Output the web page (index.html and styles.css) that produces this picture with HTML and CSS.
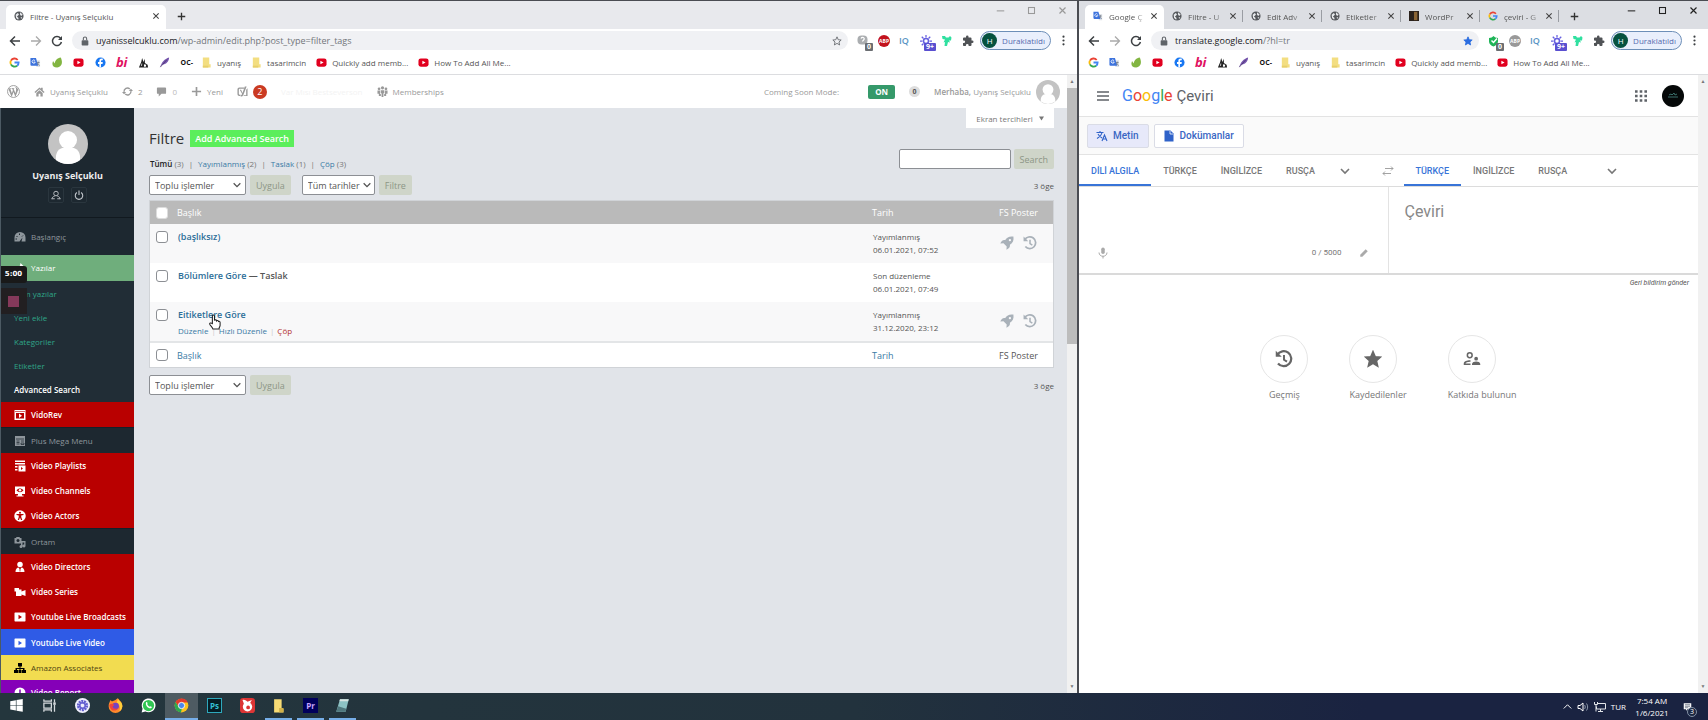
FILE: index.html
```html
<!DOCTYPE html>
<html lang="tr">
<head>
    <meta charset="UTF-8">
    <title>Filtre - Uyanış Selçuklu</title>
    <link rel="stylesheet" href="styles.css">
</head>
<body>
    <!-- icon set -->
    <svg class="defs">
        <symbol id="globe" viewBox="0 0 12 12"><circle cx="6" cy="6" r="5.5" fill="#55585c"/><path d="M2 4.5 4.5 2.5 6 4 5 5.5 3.5 6.5 5.5 8.5 5 10.5 2.5 8.500zM7.500 1.500 10.500 4.500 8.500 6 7 4zM8 7.500h2L8.500 9.500z" fill="#e8eaed"/></symbol>
        <symbol id="close" viewBox="0 0 12 12"><path d="m2 2 8 8M10 2l-8 8" stroke="currentColor" stroke-width="1.600" fill="none"/></symbol>
        <symbol id="plus" viewBox="0 0 12 12"><path d="M6 1v10M1 6h10" stroke="currentColor" stroke-width="1.800" fill="none"/></symbol>
        <symbol id="min" viewBox="0 0 12 12"><path d="M1 6.500h10" stroke="currentColor" stroke-width="1.400"/></symbol>
        <symbol id="max" viewBox="0 0 12 12"><rect x="2" y="2" width="8" height="8" fill="none" stroke="currentColor" stroke-width="1.400"/></symbol>
        <symbol id="back" viewBox="0 0 12 12"><path d="M11 6H2M6 1.500 1.500 6 6 10.500" stroke="currentColor" stroke-width="1.500" fill="none"/></symbol>
        <symbol id="fwd" viewBox="0 0 12 12"><path d="M1 6h9M6 1.500 10.500 6 6 10.500" stroke="currentColor" stroke-width="1.300" fill="none"/></symbol>
        <symbol id="reload" viewBox="0 0 12 12"><path d="M9.500 3.200A4.500 4.500 0 1 0 10.400 7" stroke="currentColor" stroke-width="1.500" fill="none"/><path d="M11 1v4H7z" fill="currentColor"/></symbol>
        <symbol id="lock" viewBox="0 0 12 12"><rect x="2" y="5" width="8" height="6.500" rx="1" fill="#5f6368"/><path d="M4 5V3.200a2 2 0 0 1 4 0V5" stroke="#5f6368" stroke-width="1.300" fill="none"/></symbol>
        <symbol id="star" viewBox="0 0 24 24"><path d="m12 2 3 7 7 .6-5.300 4.800 1.600 7.100L12 17.700 5.700 21.500l1.600-7.100L2 9.600 9 9z" stroke="currentColor" stroke-width="2"/></symbol>
        <symbol id="dots" viewBox="0 0 12 12"><circle cx="6" cy="1.800" r="1.200"/><circle cx="6" cy="6" r="1.200"/><circle cx="6" cy="10.200" r="1.200"/></symbol>
        <symbol id="puzzle" viewBox="0 0 24 24"><path d="M20.500 11H19V7a2 2 0 0 0-2-2h-4V3.500a2.500 2.500 0 0 0-5 0V5H4a2 2 0 0 0-2 2v3.800h1.500a2.700 2.700 0 0 1 0 5.400H2V20c0 1.100.9 2 2 2h3.800v-1.500a2.700 2.700 0 0 1 5.400 0V22H17a2 2 0 0 0 2-2v-4h1.500a2.500 2.500 0 0 0 0-5z" fill="#505356"/></symbol>
        <symbol id="down" viewBox="0 0 12 12"><path d="m2 4 4 4 4-4" stroke="currentColor" stroke-width="1.600" fill="none"/></symbol>
        <symbol id="google" viewBox="0 0 24 24"><path d="M19 6.500A9 9 0 0 0 4.200 8" stroke="#ea4335" stroke-width="4" fill="none"/><path d="M4.200 8a9 9 0 0 0 0 8" stroke="#fbbc05" stroke-width="4" fill="none"/><path d="M4.200 16a9 9 0 0 0 13.600 3" stroke="#34a853" stroke-width="4" fill="none"/><path d="M12 12h9a9 9 0 0 1-3.200 7" stroke="#4285f4" stroke-width="4" fill="none"/></symbol>
        <symbol id="gtrans" viewBox="0 0 24 24"><path d="M10 7h12v15H14z" fill="#dfe3e8"/><path d="M1 2h12l5 17H3a2 2 0 0 1-2-2z" fill="#3d73dd"/><path d="M11 8a3.500 3.500 0 1 0 .5 3H8" stroke="#fff" stroke-width="1.800" fill="none"/><path d="M15 12h6M18 10v2c0 2-1 4-3 5m2-3 4 5" stroke="#6b7480" stroke-width="1.500" fill="none"/></symbol>
        <symbol id="leaf" viewBox="0 0 24 24"><path d="M19 1c4 7 5 21-8 22C2 23-1 17 2 10c1-2 2 3 4 4C6 8 12 2 19 1z" fill="#82b541"/></symbol>
        <symbol id="yt" viewBox="0 0 24 24"><rect x="1" y="3" width="22" height="18" rx="5" fill="#e1001f"/><path d="m9.500 8 7 4-7 4z" fill="#fff"/></symbol>
        <symbol id="fb" viewBox="0 0 24 24"><circle cx="12" cy="12" r="11" fill="#1877f2"/><path d="M13 23v-8h3.500l.5-4h-4V9c0-1.300.7-2 2-2h2V3.500C12 2.700 9.500 5 9.500 8v3H6.500v4h3v8z" fill="#fff"/></symbol>
        <symbol id="rabbit" viewBox="0 0 24 24"><path d="M2 23 7 11l2-9 3 9 3-7v9l6 4 1 6z" fill="#222"/><path d="m9 12-3 8 3-2zM13 16l5 1-1 4h-4z" fill="#fff"/></symbol>
        <symbol id="feather" viewBox="0 0 24 24"><path d="M2 23C6 11 12 4 22 1c0 9-7 15-15 16z" fill="#7655ad"/><path d="M3 22 17 6" stroke="#433063" stroke-width="1.500"/></symbol>
        <symbol id="folder" viewBox="0 0 24 24"><path d="M4 1h14v15h3v7H4z" fill="#f3de81"/><path d="M4 19h12v4H4z" fill="#e7cf6c"/></symbol>
        <symbol id="sunext" viewBox="0 0 24 24"><circle cx="12" cy="12" r="5" fill="none" stroke="#655fe0" stroke-width="3"/><path d="M12 0v5M12 19v5M0 12h5M19 12h5M3.500 3.500 7 7M20.500 3.500 17 7M3.500 20.500 7 17" stroke="#655fe0" stroke-width="2.500"/></symbol>
        <symbol id="bird" viewBox="0 0 24 24"><path d="M2 2h6l2 3h5l3-3 3 3-1 6h-4l2 4-4-1-2 8H7l1-8-3 1 3-6-5-1z" fill="#30e0a0"/></symbol>
        <symbol id="shield" viewBox="0 0 24 24"><rect x="1" y="1" width="20" height="18" rx="8" fill="#aaadb0"/><path d="M8 7c2-4 8-2 6 2-1 2-3 2-3 4" stroke="#fff" stroke-width="2.500" fill="none"/></symbol>
        <symbol id="check" viewBox="0 0 24 24"><path d="M2 6c4 0 7-2 9-4 2 2 5 4 9 4v7c0 5-5 8-9 10-5-2-9-5-9-10z" fill="#1fb458"/><path d="m7 11 4 4 7-8" stroke="#fff" stroke-width="3" fill="none"/></symbol>
        <symbol id="wp" viewBox="0 0 24 24"><circle cx="12" cy="12" r="11" fill="none" stroke="#999" stroke-width="1.700"/><path d="M3 8.500 8.500 22 12 13l3.500 9L21 8.500c-1-2-3-4.500-6-5.500 3 4 2 7 .500 12L12 6.500h1.500v-1H8v1h1.500l1.300 3-1.800 5.800L6 6.500h1.500v-1H5z" fill="#999"/></symbol>
        <symbol id="home" viewBox="0 0 24 24"><path d="M12 3 1 13l2 2 9-8 9 8 2-2-4-4V4h-4v2z"/><path d="m5 15 7-6 7 6v8h-5v-6h-4v6H5z"/></symbol>
        <symbol id="update" viewBox="0 0 24 24"><path d="M4.500 13A7.500 7.500 0 0 1 17 6.500M19.500 11A7.500 7.500 0 0 1 7 17.500" fill="none" stroke="#999" stroke-width="3"/><path d="M0 13h9l-4.500 5zM15 11h9l-4.500-5z"/></symbol>
        <symbol id="comment" viewBox="0 0 24 24"><path d="M4 3h16a2 2 0 0 1 2 2v10a2 2 0 0 1-2 2h-8l-6 6v-6H4a2 2 0 0 1-2-2V5c0-1 1-2 2-2z"/></symbol>
        <symbol id="yoast" viewBox="0 0 24 24"><path d="M5 3h11l-1 3H6a2 2 0 0 0-2 2v9a2 2 0 0 0 2 2h2l-1 3H5a4 4 0 0 1-4-4V7a4 4 0 0 1 4-4z"/><path d="M6 8h3l3 7 5-14h4l-7 18c-1 3-3 4-6 4v-3c2 0 3-1 3-3zM20 8l3-3v17h-9l1-2h5z"/></symbol>
        <symbol id="group" viewBox="0 0 24 24"><circle cx="12" cy="4" r="3.500"/><circle cx="4.500" cy="6" r="3"/><circle cx="19.500" cy="6" r="3"/><path d="M8 9h8v7h-2v8h-4v-8H8zM1 10h5.500v7l2 1v4H4v-5H1zM23 10h-5.500v7l-2 1v4H20v-5h3z"/></symbol>
        <symbol id="person" viewBox="0 0 40 40"><circle cx="20" cy="20" r="20" fill="#c3c3c3"/><circle cx="20" cy="16" r="9" fill="#fff"/><path d="M8 36c-1-9 4-13 12-13s13 4 12 13a20 20 0 0 1-24 0z" fill="#fff"/></symbol>
        <symbol id="user" viewBox="0 0 24 24"><circle cx="12" cy="8.500" r="5.500" fill="none" stroke="#b4b9be" stroke-width="2.400"/><path d="M2 22c0-4 3-6 7-7.500M22 22c0-4-3-6-7-7.500M2 21h7M15 21h7" stroke="#b4b9be" stroke-width="2.400" fill="none"/></symbol>
        <symbol id="power" viewBox="0 0 24 24"><path d="M7 6a9 9 0 1 0 10 0M12 1v11" stroke="#c4c9ce" stroke-width="2.600" fill="none"/></symbol>
        <symbol id="gauge" viewBox="0 0 24 24"><path d="M1 21V13a11 11 0 0 1 22 0v8h-8l2-8-6 8z"/><path d="m5 10 2 2M11 5v3M3 16h3M18 9l-2 2" stroke="#1d2830" stroke-width="2"/></symbol>
        <symbol id="vido" viewBox="0 0 24 24"><path d="M1 2h22v20H1z"/><path d="M4 8h16v11H4z" fill="#b90000"/><path d="m10 9 6 4.500-6 4.500z"/><path d="M2 5h20" stroke="#b90000" stroke-width="1.200"/></symbol>
        <symbol id="mega" viewBox="0 0 24 24"><path d="M2 2h20v20H2z"/><path d="M4 8h16M5 12h6M14 12h6M5 15h6M5 18h6M14 16h6v3h-6z" stroke="#1d2830" stroke-width="1.500" fill="none"/></symbol>
        <symbol id="playlist" viewBox="0 0 24 24"><path d="M2 1h20v3H2zM2 6h20v3H2zM2 12h5v3H2zM2 18h5v3H2zM9 11h14v12H9z"/><path d="m14 14 4 3-4 3z" fill="#b90000"/></symbol>
        <symbol id="channel" viewBox="0 0 24 24"><path d="M2 3h20v15h-6v3h3v2H5v-2h3v-3H2z"/><path d="M5 10.500c4-5 10-5 14 0-4 5-10 5-14 0z" fill="#b90000"/><circle cx="12" cy="10.500" r="2.500"/></symbol>
        <symbol id="actor" viewBox="0 0 24 24"><circle cx="12" cy="12" r="11.500"/><circle cx="12" cy="5.500" r="2" fill="#b90000"/><path d="M5 8h14v2l-4.500 1v3l2 6h-2.500l-2-5-2 5H7.500l2-6v-3L5 10z" fill="#b90000"/></symbol>
        <symbol id="media" viewBox="0 0 24 24"><path d="M1 4h3l1-2h6l1 2h3v11H1z"/><circle cx="8" cy="9" r="3" fill="#1d2830"/><path d="M14 10h9v10a3 3 0 1 1-2.500-3v-4H17v8a3 3 0 1 1-3-3z"/></symbol>
        <symbol id="director" viewBox="0 0 24 24"><circle cx="12" cy="7" r="5.500"/><path d="M3 22c0-6 3-9 6-9l3 4 3-4c3 0 6 3 6 9z"/><path d="M12 15v6" stroke="#b90000" stroke-width="1.500"/></symbol>
        <symbol id="series" viewBox="0 0 24 24"><path d="M1 4h9v3h5v4l8-3v12l-8-3v3H4v-9H1z"/></symbol>
        <symbol id="ytbox" viewBox="0 0 24 24"><path fill-rule="evenodd" d="M2 3h20l1 1v16l-1 1H2l-1-1V4zM9 7.500v9l7-4.500z"/></symbol>
        <symbol id="sitemap" viewBox="0 0 24 24"><path d="M8 2h8v7h-3v3h8v4h3v6h-8v-6h2v-2h-5v2h2v6H9v-6h2v-2H6v2h2v6H0v-6h3v-4h8V9H8z"/></symbol>
        <symbol id="rocket" viewBox="0 0 24 24"><path fill-rule="evenodd" d="M23 1c-7-1-11 1-14 6-4-1-7 2-8.500 6L6 12.500l5.500 5.500-.5 5.500c4-2 7-4.500 6-8.500 5-3 7-7 6-14zM17 5a2 2 0 1 1 0 4 2 2 0 0 1 0-4z"/></symbol>
        <symbol id="history" viewBox="0 0 24 24"><path d="M3 6.500A10 10 0 1 1 4 18" fill="none" stroke="currentColor" stroke-width="3"/><path d="M1 1v8h8z" fill="currentColor"/><path d="M12 6.500V13l4 2.500" stroke="currentColor" stroke-width="2.600" fill="none"/></symbol>
        <symbol id="contrib" viewBox="0 0 24 24"><circle cx="9" cy="7" r="3.200" fill="none" stroke="#666" stroke-width="2"/><path d="M1 20v-2c0-3 5-4.500 9-4.300v2C6.500 15.500 3.500 17 3.200 18H10v2z"/><circle cx="17.500" cy="11.500" r="2.500"/><path d="M12 20v-1.500c0-2.200 3-3.300 5.500-3.300s5.500 1.100 5.500 3.300V20z"/></symbol>
    </svg>

    <div class="windows">
        <!-- wordpress window -->
        <section class="window inactive">
            <div class="tabstrip">
                <div class="tab active wide"><svg><use href="#globe"/></svg><span>Filtre - Uyanış Selçuklu</span><button class="x"><svg><use href="#close"/></svg></button></div>
                <button class="newtab"><svg><use href="#plus"/></svg></button>
                <div class="controls">
                    <button><svg><use href="#min"/></svg></button><button><svg><use href="#max"/></svg></button><button><svg><use href="#close"/></svg></button>
                </div>
            </div>
            <div class="toolbar">
                <button><svg><use href="#back"/></svg></button>
                <button class="off"><svg><use href="#fwd"/></svg></button>
                <button><svg><use href="#reload"/></svg></button>
                <div class="omnibox"><svg><use href="#lock"/></svg><span><b>uyanisselcuklu.com</b>/wp-admin/edit.php?post_type=filter_tags</span><svg class="fav"><use href="#star"/></svg></div>
                <div class="ext">
                    <i><svg><use href="#shield"/></svg><em>0</em></i>
                    <i class="abp">ABP</i>
                    <i class="iq">IQ</i>
                    <i><svg><use href="#sunext"/></svg><em class="violet">9+</em></i>
                    <i><svg><use href="#bird"/></svg></i>
                    <i><svg><use href="#puzzle"/></svg></i>
                </div>
                <button class="profile"><span>H</span>Duraklatıldı</button>
                <button class="more"><svg><use href="#dots"/></svg></button>
            </div>
            <nav class="bookmarks">
                <div class="favicons">
                    <a href="#"><svg><use href="#google"/></svg></a><a href="#"><svg><use href="#gtrans"/></svg></a><a href="#"><svg><use href="#leaf"/></svg></a><a href="#"><svg><use href="#yt"/></svg></a><a href="#"><svg><use href="#fb"/></svg></a><a href="#" class="bi">bi</a><a href="#"><svg><use href="#rabbit"/></svg></a><a href="#"><svg><use href="#feather"/></svg></a><a href="#" class="oc">OC-</a>
                </div>
                <a href="#"><svg><use href="#folder"/></svg>uyanış</a>
                <a href="#"><svg><use href="#folder"/></svg>tasarimcin</a>
                <a href="#"><svg><use href="#yt"/></svg>Quickly add memb...</a>
                <a href="#"><svg><use href="#yt"/></svg>How To Add All Me...</a>
            </nav>
            <div class="viewport">
                <div class="page wp">
                    <header class="adminbar">
                        <a href="#" class="logo"><svg><use href="#wp"/></svg></a>
                        <a href="#"><svg><use href="#home"/></svg>Uyanış Selçuklu</a>
                        <a href="#"><svg><use href="#update"/></svg>2</a>
                        <a href="#" class="dim"><svg><use href="#comment"/></svg>0</a>
                        <a href="#"><svg><use href="#plus"/></svg>Yeni</a>
                        <a href="#"><svg><use href="#yoast"/></svg><span class="count">2</span></a>
                        <a href="#" class="ghost">Var Mısı Bestseverson</a>
                        <a href="#"><svg><use href="#group"/></svg>Memberships</a>
                        <div class="right">
                            <span>Coming Soon Mode:</span>
                            <button class="on">ON</button>
                            <span class="zero">0</span>
                            <a href="#" class="me"><span><b>Merhaba,</b> Uyanış Selçuklu</span><svg><use href="#person"/></svg></a>
                        </div>
                    </header>
                    <div class="admin">
                        <aside class="sidebar">
                            <div class="account">
                                <svg class="avatar"><use href="#person"/></svg>
                                <strong>Uyanış Selçuklu</strong>
                                <div><button><svg><use href="#user"/></svg></button><button><svg><use href="#power"/></svg></button></div>
                            </div>
                            <ul class="menu">
                                <li class="dash"><a href="#"><svg><use href="#gauge"/></svg>Başlangıç</a></li>
                                <li class="current"><a href="#"><svg viewBox="0 0 24 24"><path d="m13 2 9 9-5 1-5 5-5-5 5-5z"/></svg>Yazılar</a></li>
                                <li class="sub">
                                    <a href="#">Tüm yazılar</a>
                                    <a href="#">Yeni ekle</a>
                                    <a href="#">Kategoriler</a>
                                    <a href="#">Etiketler</a>
                                    <a href="#" class="sel">Advanced Search</a>
                                </li>
                                <li class="red"><a href="#"><svg><use href="#vido"/></svg>VidoRev</a></li>
                                <li class="line"><a href="#"><svg><use href="#mega"/></svg>Plus Mega Menu</a></li>
                                <li class="red"><a href="#"><svg><use href="#playlist"/></svg>Video Playlists</a></li>
                                <li class="red"><a href="#"><svg><use href="#channel"/></svg>Video Channels</a></li>
                                <li class="red"><a href="#"><svg><use href="#actor"/></svg>Video Actors</a></li>
                                <li class="line"><a href="#"><svg><use href="#media"/></svg>Ortam</a></li>
                                <li class="red"><a href="#"><svg><use href="#director"/></svg>Video Directors</a></li>
                                <li class="red"><a href="#"><svg><use href="#series"/></svg>Video Series</a></li>
                                <li class="red"><a href="#"><svg><use href="#ytbox"/></svg>Youtube Live Broadcasts</a></li>
                                <li class="blue line"><a href="#"><svg><use href="#ytbox"/></svg>Youtube Live Video</a></li>
                                <li class="yellow"><a href="#"><svg><use href="#sitemap"/></svg>Amazon Associates</a></li>
                                <li class="purple"><a href="#"><svg viewBox="0 0 24 24"><circle cx="12" cy="12" r="11"/><path d="M12 5v8" stroke="#8500b8" stroke-width="3"/></svg>Video Report</a></li>
                            </ul>
                            <div class="recorder"><span>5:00</span><button></button></div>
                        </aside>
                        <main class="content">
                            <button class="screen-options">Ekran tercihleri <svg viewBox="0 0 12 12"><path d="M0 1h12L6 11z"/></svg></button>
                            <div class="heading"><h1>Filtre</h1><a href="#" class="add">Add Advanced Search</a></div>
                            <div class="subrow">
                                <p class="views"><b>Tümü</b> (3)<i>|</i><a href="#">Yayımlanmış</a> (2)<i>|</i><a href="#">Taslak</a> (1)<i>|</i><a href="#">Çöp</a> (3)</p>
                                <form class="search"><input type="text" aria-label="Ara"><button type="button" class="btn">Search</button></form>
                            </div>
                            <div class="tablenav">
                                <div class="select"><select aria-label="Toplu işlemler"><option>Toplu işlemler</option></select><svg><use href="#down"/></svg></div>
                                <button class="btn">Uygula</button>
                                <div class="select dates"><select aria-label="Tarih"><option>Tüm tarihler</option></select><svg><use href="#down"/></svg></div>
                                <button class="btn">Filtre</button>
                                <span class="total">3 öge</span>
                            </div>
                            <table>
                                <thead>
                                    <tr><th class="cb"><input type="checkbox" aria-label="Tümünü seç"></th><th>Başlık</th><th class="date">Tarih</th><th class="fs">FS Poster</th></tr>
                                </thead>
                                <tbody>
                                    <tr>
                                        <td class="cb"><input type="checkbox" aria-label="(başlıksız)"></td>
                                        <td><a href="#" class="title">(başlıksız)</a></td>
                                        <td class="when">Yayımlanmış<br>06.01.2021, 07:52</td>
                                        <td class="icons"><svg><use href="#rocket"/></svg><svg><use href="#history"/></svg></td>
                                    </tr>
                                    <tr>
                                        <td class="cb"><input type="checkbox" aria-label="Bölümlere Göre"></td>
                                        <td><a href="#" class="title">Bölümlere Göre</a><b> — Taslak</b></td>
                                        <td class="when">Son düzenleme<br>06.01.2021, 07:49</td>
                                        <td></td>
                                    </tr>
                                    <tr>
                                        <td class="cb"><input type="checkbox" aria-label="Eitiketlere Göre"></td>
                                        <td>
                                            <a href="#" class="title">Eitiketlere Göre</a>
                                            <svg class="hand" viewBox="0 0 24 30"><path d="M8 18V4c0-3 4-3 4 0v8c1-2 4-1 4 1 1-1 3-1 3.500 1 1.500-1 3 0 3 2v5c0 3-2 4-2 7H9c-1-4-5-6-6-9-.6-2 2-3 5-1z" fill="#fff" stroke="#222" stroke-width="2"/></svg>
                                            <div class="actions"><a href="#">Düzenle</a><i>|</i><a href="#">Hızlı Düzenle</a><i>|</i><a href="#" class="trash">Çöp</a></div>
                                        </td>
                                        <td class="when">Yayımlanmış<br>31.12.2020, 23:12</td>
                                        <td class="icons"><svg><use href="#rocket"/></svg><svg><use href="#history"/></svg></td>
                                    </tr>
                                </tbody>
                                <tfoot>
                                    <tr><th class="cb"><input type="checkbox" aria-label="Tümünü seç"></th><th><a href="#">Başlık</a></th><th><a href="#">Tarih</a></th><th class="fs">FS Poster</th></tr>
                                </tfoot>
                            </table>
                            <div class="tablenav bottom">
                                <div class="select"><select aria-label="Toplu işlemler"><option>Toplu işlemler</option></select><svg><use href="#down"/></svg></div>
                                <button class="btn">Uygula</button>
                                <span class="total">3 öge</span>
                            </div>
                        </main>
                    </div>
                </div>
                <div class="scrollbar"><span>▲</span><div class="thumb"></div><span>▼</span></div>
            </div>
        </section>

        <!-- translate window -->
        <section class="window">
            <div class="tabstrip">
                <div class="tab active"><svg><use href="#gtrans"/></svg><span>Google Ç</span><button class="x"><svg><use href="#close"/></svg></button></div>
                <div class="tab"><svg><use href="#globe"/></svg><span>Filtre - U</span><button class="x"><svg><use href="#close"/></svg></button></div>
                <div class="tab"><svg><use href="#globe"/></svg><span>Edit Adv</span><button class="x"><svg><use href="#close"/></svg></button></div>
                <div class="tab"><svg><use href="#globe"/></svg><span>Etiketler</span><button class="x"><svg><use href="#close"/></svg></button></div>
                <div class="tab"><svg viewBox="0 0 12 12"><path d="M0 0h12v12H0z" fill="#2a211b"/><path d="M6 1h4v10H6z" fill="#8a6434"/></svg><span>WordPr</span><button class="x"><svg><use href="#close"/></svg></button></div>
                <div class="tab"><svg><use href="#google"/></svg><span>çeviri - G</span><button class="x"><svg><use href="#close"/></svg></button></div>
                <button class="newtab"><svg><use href="#plus"/></svg></button>
                <div class="controls">
                    <button><svg><use href="#min"/></svg></button><button><svg><use href="#max"/></svg></button><button><svg><use href="#close"/></svg></button>
                </div>
            </div>
            <div class="toolbar">
                <button><svg><use href="#back"/></svg></button>
                <button class="off"><svg><use href="#fwd"/></svg></button>
                <button><svg><use href="#reload"/></svg></button>
                <div class="omnibox"><svg><use href="#lock"/></svg><span><b>translate.google.com</b>/?hl=tr</span><svg class="fav saved"><use href="#star"/></svg></div>
                <div class="ext">
                    <i><svg><use href="#check"/></svg><em>0</em></i>
                    <i class="abp gray">ABP</i>
                    <i class="iq">IQ</i>
                    <i><svg><use href="#sunext"/></svg><em class="violet">9+</em></i>
                    <i><svg><use href="#bird"/></svg></i>
                    <i><svg><use href="#puzzle"/></svg></i>
                </div>
                <button class="profile"><span>H</span>Duraklatıldı</button>
                <button class="more"><svg><use href="#dots"/></svg></button>
            </div>
            <nav class="bookmarks">
                <div class="favicons">
                    <a href="#"><svg><use href="#google"/></svg></a><a href="#"><svg><use href="#gtrans"/></svg></a><a href="#"><svg><use href="#leaf"/></svg></a><a href="#"><svg><use href="#yt"/></svg></a><a href="#"><svg><use href="#fb"/></svg></a><a href="#" class="bi">bi</a><a href="#"><svg><use href="#rabbit"/></svg></a><a href="#"><svg><use href="#feather"/></svg></a><a href="#" class="oc">OC-</a>
                </div>
                <a href="#"><svg><use href="#folder"/></svg>uyanış</a>
                <a href="#"><svg><use href="#folder"/></svg>tasarimcin</a>
                <a href="#"><svg><use href="#yt"/></svg>Quickly add memb...</a>
                <a href="#"><svg><use href="#yt"/></svg>How To Add All Me...</a>
            </nav>
            <div class="viewport">
                <div class="page translate">
                    <header>
                        <button class="burger"><svg viewBox="0 0 12 12"><path d="M0 2h12M0 6h12M0 10h12" stroke="#5f6368" stroke-width="1.500"/></svg></button>
                        <h2><span class="g1">G</span><span class="g2">o</span><span class="g3">o</span><span class="g1">g</span><span class="g4">l</span><span class="g2">e</span> <small>Çeviri</small></h2>
                        <button class="apps"><svg viewBox="0 0 12 12"><path d="M0 1.500h12M0 6h12M0 10.500h12" stroke="#5f6368" stroke-width="2.600" stroke-dasharray="2.600 2.100"/></svg></button>
                        <button class="face"><svg viewBox="0 0 12 12"><path d="M1 7h10M2 5l2-1 1 1 2-2 1 2 2-1" stroke="#3a6f6a" fill="none"/></svg></button>
                    </header>
                    <div class="modes">
                        <button class="picked"><svg viewBox="0 0 24 24"><path d="M1 5h14M8 2v3M12 5c-1 5-5 9-10 12M4 8c2 4 5 6 8 8M12 22l5-12 5 12M14 18h6" stroke="#2f62c9" stroke-width="2.200" fill="none"/></svg>Metin</button>
                        <button><svg viewBox="0 0 24 24"><path d="M3 1h12l6 6v16H3z" fill="#2f62c9"/><path d="M14 2v6h6" stroke="#fff" stroke-width="1.600" fill="none"/></svg>Dokümanlar</button>
                    </div>
                    <div class="langs">
                        <div><button class="picked">DİLİ ALGILA</button><button>TÜRKÇE</button><button>İNGİLİZCE</button><button>RUSÇA</button><button class="chev"><svg><use href="#down"/></svg></button></div>
                        <button class="swap"><svg viewBox="0 0 24 24"><path d="M6 7h16M18 3l4 4-4 4M18 17H2M6 13l-4 4 4 4" stroke="#999" stroke-width="1.800" fill="none"/></svg></button>
                        <div><button class="picked">TÜRKÇE</button><button>İNGİLİZCE</button><button>RUSÇA</button><button class="chev far"><svg><use href="#down"/></svg></button></div>
                    </div>
                    <div class="panes">
                        <div class="source">
                            <textarea aria-label="Kaynak metin"></textarea>
                            <div class="tools">
                                <svg viewBox="0 0 24 24"><rect x="8.500" y="1" width="7" height="13" rx="3.500" fill="#aaa"/><path d="M4 11c0 10 16 10 16 0M12 18v5" stroke="#aaa" stroke-width="2" fill="none"/></svg>
                                <span>0 / 5000</span>
                                <svg class="pen" viewBox="0 0 24 24"><path d="M3 21v-5L16 3l5 5L8 21z" fill="#aaa"/></svg>
                            </div>
                        </div>
                        <div class="target">Çeviri</div>
                    </div>
                    <a href="#" class="feedback">Geri bildirim gönder</a>
                    <div class="shortcuts">
                        <a href="#" class="mid"><i><svg><use href="#history"/></svg></i>Geçmiş</a>
                        <a href="#"><i><svg class="solid"><use href="#star"/></svg></i>Kaydedilenler</a>
                        <a href="#"><i><svg><use href="#contrib"/></svg></i>Katkıda bulunun</a>
                    </div>
                </div>
                <div class="scrollbar"><span>▲</span><span>▼</span></div>
            </div>
        </section>
    </div>

    <footer class="taskbar">
        <button><svg viewBox="0 0 24 24"><path d="m2 5 9-1.500V11H2zM12 3l10-1.500V11H12zM2 12h9v8l-9-1.500zM12 12h10v10l-10-1.500z" fill="#fff"/></svg></button>
        <button><svg viewBox="0 0 24 24"><path d="M3 8h12v8H3zM3 2v3h12V2M3 22v-3h12v3M20 2v5M20 11v11" stroke="#d5dadd" stroke-width="2" fill="none"/><path d="M18 7h4v4h-4z" fill="#d5dadd"/></svg></button>
        <button><svg viewBox="0 0 24 24"><circle cx="12" cy="12" r="12" fill="#efeffc"/><circle cx="12" cy="12" r="6" fill="none" stroke="#625fd0" stroke-width="6" stroke-dasharray="2.700 1"/><circle cx="12" cy="12" r="4.500" fill="none" stroke="#625fd0" stroke-width="2"/></svg></button>
        <button><svg viewBox="0 0 24 24"><path d="M12 3c2-2 3-2 4-3 0 3 7 5 7 13a11 11 0 0 1-22 0C1 8 3 6 4 3c1 1 1 2 3 2z" fill="#ff8a2b"/><path d="M16 1c1 4 7 5 7 12-1 5-3 7-5 8 3-6 0-12-4-14z" fill="#ffcf3a"/><circle cx="12" cy="13" r="5.500" fill="#7543c0"/><path d="M2 11c3-3 6-2 8 0l-3 3c2 4 7 4 9 1-1 7-12 8-14-4z" fill="#f0443c"/></svg></button>
        <button><svg viewBox="0 0 24 24"><path d="M1 23 2.500 17A11 11 0 1 1 7 21.500z" fill="#fff"/><circle cx="12" cy="12" r="9" fill="#31c653"/><path d="M8 7c1-1 2-.5 2.500 1.500L10 10c1 2 2 3 4 4l1.500-1c2 1 2.500 1.500 1 3-4 2-10-4-8.500-9z" fill="#fff"/></svg></button>
        <button class="focus"><svg viewBox="0 0 24 24"><circle cx="12" cy="12" r="11" fill="#fcc31e"/><path d="M2.500 6.500A11 11 0 0 1 22 7H12L7 14z" fill="#e33b2e"/><path d="M2.500 6.500 8 15l5 1-2 7A11 11 0 0 1 2.500 6.500z" fill="#2da94f"/><circle cx="12" cy="12" r="5" fill="#4a87ee" stroke="#fff" stroke-width="1.400"/></svg></button>
        <button><span class="ps">Ps</span></button>
        <button><svg viewBox="0 0 24 24"><rect width="24" height="24" rx="5" fill="#dc3535"/><circle cx="12" cy="14" r="7.500" fill="#fff"/><circle cx="13" cy="15" r="3" fill="#dc3535"/><path d="M4 3c4-1 6 1 8 3l7-3-4 7-8 1z" fill="#fff"/></svg></button>
        <button class="open"><svg viewBox="0 0 24 24"><path d="M5 2h12v15h3v6H5z" fill="#f8dc75"/><path d="M13 16h7v7h-7z" fill="#d3b24a"/></svg></button>
        <button class="open"><span class="pr">Pr</span></button>
        <button class="open"><svg viewBox="0 0 24 24"><path d="M8 2h14l-5 20H2z" fill="#8cc2c4"/><path d="m2 22 3-9 13 4-1 5z" fill="#50777d"/><path d="M8 2h14l-1 3H7z" fill="#d8e4e2"/></svg></button>
        <div class="tray">
            <svg viewBox="0 0 12 12"><path d="m1 8 5-5 5 5" stroke="#fff" stroke-width="1.300" fill="none"/></svg>
            <svg viewBox="0 0 24 24"><path d="M2 9h4l6-5v16l-6-5H2z" stroke="#fff" stroke-width="2" fill="none"/><path d="M15 8c2 2 2 6 0 8M19 5c3 4 3 10 0 14" stroke="#8d99ab" stroke-width="2" fill="none"/></svg>
            <svg viewBox="0 0 24 24"><path d="M8 5h15v11H5v-5M13 16v5M8 21h10M1 2v5h6V2M4 7v14" stroke="#e3e6ea" stroke-width="2" fill="none"/></svg>
            <span>TUR</span>
            <time>7:54 AM<br>1/6/2021</time>
            <button class="notes"><svg viewBox="0 0 24 24"><path d="M2 2h20v16H12l-4 4v-4H2z" fill="#fff"/><path d="M5 6h14M5 10h14M5 14h9" stroke="#1b2742" stroke-width="1.500"/></svg><em>3</em></button>
        </div>
    </footer>
</body>
</html>
```
FILE: styles.css
```css
*{
    margin: 0;
    padding: 0;
    box-sizing: border-box;
}
body{
    display: flex;
    flex-direction: column;
    height: 100vh;
    overflow: hidden;
    font: 9px/13px "Open Sans", "Noto Sans", sans-serif;
    color: #555;
    background: #4a4c52;
}
a{
    color: inherit;
    text-decoration: none;
}
button, input, select, textarea{
    font: inherit;
    color: inherit;
    border: 0;
    background: none;
}
svg{
    display: block;
    flex: none;
    width: 12px;
    height: 12px;
    fill: currentColor;
}
i, em{
    font-style: normal;
}
.defs{
    position: absolute;
    width: 0;
    height: 0;
}

/* windows */
.windows{
    flex: 1;
    min-height: 0;
    display: grid;
    grid-template-columns: 1077fr 629fr;
    gap: 2px;
    padding-top: 1px;
}
.window{
    display: flex;
    flex-direction: column;
    min-width: 0;
    min-height: 0;
    background: #fff;
}
.tabstrip{
    display: flex;
    align-items: flex-end;
    height: 28px;
    padding-left: 6px;
    background: #dcdee3;
    font-size: 8px;
}
.inactive .tabstrip{
    background: #e8e9ed;
}
.tab{
    display: flex;
    align-items: center;
    gap: 6px;
    width: 79px;
    height: 24px;
    padding: 0 6px 2px 8px;
    border-radius: 5px 5px 0 0;
}
.tab svg{
    width: 10px;
    height: 10px;
}
.tab span{
    flex: 1;
    white-space: nowrap;
    -webkit-mask-image: linear-gradient(90deg, #000 70%, transparent 110%);
}
.tab.active{
    background: #fff;
}
.tab.wide{
    width: 160px;
}
.tab.wide span{
    -webkit-mask-image: none;
}
.tab + .tab{
    position: relative;
}
.tab:not(.active)::after{
    content: "";
    position: absolute;
    right: 0;
    top: 5px;
    height: 12px;
    border-right: 1px solid #9a9da3;
}
.tab .x svg{
    width: 8px;
    height: 8px;
    color: #444;
}
.newtab{
    align-self: center;
    margin: 3px 0 0 11px;
    color: #333;
}
.newtab svg{
    width: 9px;
    height: 9px;
}
.controls{
    display: flex;
    gap: 22px;
    margin: 0 10px 14px auto;
    color: #222;
}
.inactive .controls{
    color: #999;
}
.controls svg{
    width: 9px;
    height: 9px;
}
.toolbar{
    display: flex;
    align-items: center;
    height: 23px;
    padding: 0 8px 0 9px;
    gap: 9px;
}
.toolbar button{
    color: #3c4043;
}
.toolbar .off{
    color: #aaa;
}
.omnibox{
    flex: 1;
    display: flex;
    align-items: center;
    gap: 6px;
    height: 19px;
    padding: 0 6px 0 8px;
    border-radius: 10px;
    background: #f0f1f4;
    color: #71757a;
}
.omnibox b{
    font-weight: normal;
    color: #202124;
}
.omnibox svg{
    width: 10px;
    height: 10px;
}
.omnibox .fav{
    margin-left: auto;
    fill: none;
    color: #5f6368;
}
.omnibox .saved{
    fill: #2b6de0;
    color: #2b6de0;
}
.ext{
    display: flex;
    gap: 9px;
}
.ext i{
    position: relative;
    width: 12px;
    height: 12px;
}
.ext em{
    position: absolute;
    right: -4px;
    bottom: -4px;
    padding: 0 2px;
    border-radius: 1px;
    background: #6b6e72;
    color: #fff;
    font-size: 7px;
    line-height: 8px;
    font-weight: bold;
}
.ext .violet{
    background: #5a4fd0;
}
.ext .abp{
    border-radius: 50%;
    background: #c2121d;
    color: #fff;
    font-size: 5px;
    line-height: 12px;
    font-weight: bold;
    text-align: center;
}
.ext .gray{
    background: #999;
}
.ext .iq{
    color: #5894c4;
    font-weight: 600;
    line-height: 12px;
}
.toolbar .profile{
    display: flex;
    align-items: center;
    gap: 5px;
    height: 19px;
    margin-left: -3px;
    padding: 0 5px 0 1px;
    border: 1px solid #6d8fb8;
    border-radius: 10px;
    background: #e9effc;
    color: #5569ad;
    font-size: 8px;
}
.profile span{
    width: 15px;
    border-radius: 50%;
    background: #06523f;
    color: #fff;
    line-height: 15px;
}
.toolbar .more{
    margin-left: -2px;
}
.more svg{
    width: 11px;
    height: 11px;
}
.bookmarks{
    display: flex;
    align-items: center;
    gap: 10px;
    height: 23px;
    padding: 0 0 2px 9px;
    border-bottom: 1px solid #dcdde0;
    font-size: 8px;
    white-space: nowrap;
}
.bookmarks a{
    display: flex;
    align-items: center;
    gap: 5px;
}
.bookmarks svg{
    width: 11px;
    height: 11px;
}
.favicons{
    display: flex;
    justify-content: space-between;
    align-items: center;
    width: 184px;
    margin-right: -2px;
}
.bookmarks .bi{
    color: #e0115f;
    font-size: 13px;
    font-style: italic;
    font-weight: bold;
}
.bookmarks .oc{
    color: #111;
    font-size: 7px;
    font-weight: bold;
}
.viewport{
    flex: 1;
    display: flex;
    min-height: 0;
}
.page{
    flex: 1;
    min-width: 0;
    display: flex;
    flex-direction: column;
}
.scrollbar{
    display: flex;
    flex-direction: column;
    width: 10px;
    background: #f1f1f1;
    color: #777;
    font-size: 5px;
    text-align: center;
}
.scrollbar span:last-child{
    margin-top: auto;
}
.thumb{
    height: 256px;
    background: #bcbcbc;
}

/* wordpress admin */
.adminbar{
    display: flex;
    align-items: center;
    gap: 14px;
    height: 33px;
    padding: 0 7px;
    color: #999;
    font-size: 8px;
    white-space: nowrap;
}
.adminbar a{
    display: flex;
    align-items: center;
    gap: 5px;
}
.adminbar svg{
    width: 11px;
    height: 11px;
}
.adminbar .logo svg{
    width: 13px;
    height: 13px;
}
.adminbar .dim{
    color: #bbb;
}
.adminbar .dim svg{
    fill: #999;
}
.adminbar .ghost{
    color: #f3f3f3;
}
.count{
    width: 14px;
    border-radius: 50%;
    background: #ca3a22;
    color: #fff;
    font-size: 9px;
    line-height: 14px;
    text-align: center;
}
.adminbar .right{
    display: flex;
    align-items: center;
    gap: 14px;
    margin-left: auto;
}
.adminbar .on{
    width: 27px;
    height: 14px;
    margin-left: 15px;
    border-radius: 2px;
    background: #35996a;
    color: #fff;
    font-weight: bold;
    line-height: 14px;
}
.zero{
    width: 11px;
    border-radius: 50%;
    background: #ddd;
    color: #555;
    font-size: 7px;
    font-weight: bold;
    line-height: 11px;
    text-align: center;
}
.me b{
    font-weight: 600;
}
.adminbar .me svg{
    width: 24px;
    height: 24px;
}
.admin{
    flex: 1;
    display: flex;
    min-height: 0;
    background: #e1e4e9;
}
.sidebar{
    position: relative;
    width: 134px;
    overflow: hidden;
    border-left: 1px solid #4c5a63;
    background: #1d2830;
    color: #8e969c;
}
.account{
    display: flex;
    flex-direction: column;
    align-items: center;
    height: 110px;
    padding-top: 16px;
    border-bottom: 1px solid #11191f;
}
.account .avatar{
    width: 40px;
    height: 40px;
}
.account strong{
    margin: 5px 0;
    color: #eee;
    font-size: 9px;
}
.account div{
    display: flex;
    gap: 7px;
}
.account button{
    display: grid;
    place-items: center;
    width: 16px;
    height: 16px;
    border: 1px solid #2a363e;
    border-radius: 2px;
}
.account svg{
    width: 10px;
    height: 10px;
}
.menu{
    list-style: none;
    font-size: 8px;
}
.menu li > a{
    display: flex;
    align-items: center;
    gap: 5px;
    height: 25px;
    padding-left: 13px;
}
.menu svg{
    width: 12px;
}
.menu .dash a{
    height: 37px;
}
.menu .current{
    border-bottom: 1px solid #6fae7c;
    background: #6fae7c;
    color: #fff;
}
.menu .sub{
    padding-bottom: 1px;
    background: #212d36;
    color: #2fa588;
}
.menu .sub a{
    height: 24px;
}
.menu .sub .sel{
    color: #fff;
    font-weight: 600;
}
.menu .line{
    border-top: 1px solid #15202a;
}
.menu .red{
    background: #b90000;
    color: #fff;
    font-weight: 600;
}
.menu .blue{
    background: #2f5be6;
    border-color: #2f5be6;
    color: #fff;
    font-weight: 600;
}
.menu .yellow{
    background: #f2dc50;
    color: #4f4513;
}
.menu .yellow svg{
    fill: #000;
}
.menu .purple{
    background: #8500b8;
    color: #fff;
    font-weight: 600;
}
.recorder{
    position: absolute;
    top: 158px;
    left: -1px;
    width: 27px;
}
.recorder span{
    display: block;
    border-radius: 0 3px 3px 0;
    background: #191919;
    color: #fff;
    font: bold 7px/17px "DejaVu Sans", sans-serif;
    text-align: center;
}
.recorder button{
    display: block;
    width: 27px;
    height: 26px;
    margin-top: 5px;
    border: solid #221f21;
    border-width: 8px 8px 7px 8px;
    background: #85395a;
}
.content{
    flex: 1;
    padding: 0 13px 0 15px;
}
.screen-options{
    display: flex;
    align-items: center;
    justify-content: center;
    gap: 6px;
    width: 88px;
    height: 20px;
    margin-left: auto;
    background: #fff;
    color: #777;
    font-size: 8px;
}
.screen-options svg{
    width: 5px;
    height: 5px;
}
.heading{
    display: flex;
    align-items: center;
    gap: 6px;
    height: 20px;
}
.heading h1{
    font-size: 15px;
    font-weight: normal;
    color: #333;
}
.add{
    padding: 0 5px;
    background: #5bee5b;
    color: #fff;
    font-weight: 600;
    line-height: 17px;
}
.subrow{
    display: flex;
    justify-content: space-between;
    height: 27px;
}
.views{
    padding: 9px 0 0 1px;
    color: #777;
    font-size: 8px;
}
.views b{
    color: #222;
    font-weight: 600;
}
.views i{
    margin: 0 5px;
}
.views a, tfoot a, .actions a{
    color: #3a7ba5;
}
.search{
    display: flex;
    gap: 3px;
    padding-top: 1px;
}
.search input{
    width: 112px;
    height: 20px;
    border: 1px solid #8c8f94;
    border-radius: 2px;
    background: #fff;
}
.btn{
    height: 20px;
    padding: 0 6px;
    border-radius: 2px;
    background: #cfd5c9;
    color: #8d9686;
}
.tablenav{
    display: flex;
    align-items: center;
    gap: 4px;
    height: 20px;
    margin-bottom: 5px;
}
.tablenav.bottom{
    margin-top: 7px;
}
.select{
    position: relative;
    width: 97px;
}
.select.dates{
    width: 73px;
    margin-left: 7px;
}
.select select{
    width: 100%;
    height: 20px;
    padding-left: 5px;
    border: 1px solid #8c8f94;
    border-radius: 2px;
    background: #fff;
    appearance: none;
}
.select svg{
    position: absolute;
    right: 4px;
    top: 5px;
    width: 10px;
    height: 10px;
}
.dates svg{
    right: 3px;
}
.total{
    margin-left: auto;
    font-size: 8px;
}
table{
    width: 100%;
    border: 1px solid #d0d3d7;
    border-collapse: separate;
    border-spacing: 0;
    background: #fff;
    table-layout: fixed;
}
th{
    height: 23px;
    font-weight: normal;
    text-align: left;
}
thead th{
    background: #bababa;
    color: #fff;
}
.date{
    width: 127px;
}
th.fs{
    width: 54px;
}
.cb{
    width: 27px;
    padding-left: 6px;
}
.cb input{
    display: block;
    width: 12px;
    height: 12px;
    border: 1px solid #8c8f94;
    border-radius: 3px;
    background: #fff;
    appearance: none;
}
thead .cb input{
    border-color: #ddd;
}
td{
    height: 39px;
    padding: 6px 0 0 1px;
    vertical-align: top;
}
td.cb{
    padding: 7px 0 0 6px;
}
td.when{
    font-size: 8px;
}
tbody tr:nth-child(odd){
    background: #f8f8f9;
}
tfoot th{
    height: 26px;
    border-top: 2px solid #e3e5e7;
}
.title{
    color: #2c6e98;
    font-weight: 600;
}
td b{
    font-weight: 600;
}
td.icons svg{
    display: inline-block;
    width: 14px;
    height: 14px;
    margin: 6px 9px 0 0;
    color: #a9b1b9;
}
.actions{
    padding-top: 3px;
    font-size: 8px;
}
.actions i{
    margin: 0 3px;
    color: #ccc;
}
.actions .trash{
    color: #b32d2e;
}
.hand{
    position: absolute;
    margin: -7px 0 0 30px;
    width: 13px;
    height: 16px;
}

/* translate */
.translate{
    font-family: Roboto, "Liberation Sans", sans-serif;
    color: #777;
}
.translate header{
    display: flex;
    align-items: center;
    height: 42px;
    padding: 0 14px 0 18px;
    border-bottom: 1px solid #e3e3e3;
}
.translate h2{
    flex: 1;
    margin-left: 13px;
    font-size: 16px;
    font-weight: normal;
}
.translate h2 small{
    font-size: 15px;
    color: #5f6368;
}
.g1{ color: #4285f4; }
.g2{ color: #ea4335; }
.g3{ color: #fbbc05; }
.g4{ color: #34a853; }
.face{
    display: grid;
    place-items: center;
    width: 22px;
    height: 22px;
    margin-left: 15px;
    border-radius: 50%;
    background: #050808;
}
.modes{
    display: flex;
    align-items: center;
    gap: 5px;
    height: 38px;
    padding-left: 8px;
    border-bottom: 1px solid #e3e3e3;
    background: #fafafa;
}
.modes button{
    display: flex;
    align-items: center;
    gap: 5px;
    height: 24px;
    padding: 0 9px 0 8px;
    border: 1px solid #dadce6;
    border-radius: 2px;
    background: #fff;
    color: #3a67c4;
    font-size: 10px;
    font-weight: 500;
}
.modes .picked{
    background: #e7e9fa;
}
.langs{
    display: grid;
    grid-template-columns: 1fr 30px 1fr;
    height: 32px;
    border-bottom: 1px solid #dcdcdc;
}
.langs div{
    display: flex;
}
.langs button{
    padding: 3px 12px 0;
    border-bottom: 2px solid transparent;
    font-weight: 500;
}
.langs .picked{
    border-color: #3874d8;
    color: #3874d8;
}
.langs .far{
    margin-left: 15px;
}
.langs .swap{
    padding: 3px 8px 0;
}
.panes{
    display: grid;
    grid-template-columns: 1fr 1fr;
    height: 88px;
    border-bottom: 2px solid #dadada;
}
.source{
    display: flex;
    flex-direction: column;
    border-right: 1px solid #e3e3e3;
}
.source textarea{
    flex: 1;
    padding: 10px;
    outline: 0;
    resize: none;
}
.tools{
    display: flex;
    align-items: center;
    padding: 0 19px 14px 18px;
}
.tools span{
    flex: 1;
    margin-right: 17px;
    font-size: 8px;
    text-align: right;
}
.tools .pen{
    width: 10px;
}
.target{
    padding: 18px 16px;
    color: #888;
    font-size: 16px;
}
.feedback{
    align-self: flex-end;
    padding: 2px 9px 0 0;
    color: #555;
    font-size: 7px;
    font-style: italic;
}
.shortcuts{
    display: flex;
    justify-content: center;
    gap: 41px;
    margin-top: 45px;
    font-family: "Open Sans", sans-serif;
}
.shortcuts a{
    display: flex;
    flex-direction: column;
    gap: 5px;
}
.shortcuts .mid{
    align-items: center;
}
.shortcuts i{
    display: grid;
    place-items: center;
    width: 48px;
    height: 48px;
    border: 1px solid #e6e6e6;
    border-radius: 50%;
    color: #666;
}
.shortcuts svg{
    width: 18px;
    height: 18px;
}

/* taskbar */
.taskbar{
    display: flex;
    height: 27px;
    background: linear-gradient(90deg, #24363d, #22323d 50%, #1a2341 80%);
    color: #fff;
}
.taskbar > button{
    display: grid;
    place-items: center;
    width: 33px;
    border-bottom: 2px solid transparent;
}
.taskbar > button svg{
    width: 15px;
    height: 15px;
}
.taskbar .focus{
    border-color: #76aee8;
    background: #4e5b62;
}
.taskbar .open{
    width: 27px;
    margin: 0 4px 0 1px;
    border-color: #76aee8;
}
.ps, .pr{
    width: 15px;
    border: 1px solid #2ea9bd;
    background: #061e26;
    color: #34c0d4;
    font-size: 8px;
    font-weight: bold;
    line-height: 13px;
}
.pr{
    border-color: #00005b;
    background: #00005b;
    color: #c9a6ff;
}
.tray{
    display: flex;
    align-items: center;
    gap: 5px;
    margin-left: auto;
    padding-right: 16px;
    font-size: 8px;
}
.tray svg:first-child{
    width: 9px;
}
.tray time{
    width: 42px;
    line-height: 12px;
    text-align: center;
}
.notes{
    position: relative;
    margin-left: 5px;
}
.notes em{
    position: absolute;
    right: -5px;
    bottom: -4px;
    width: 10px;
    border: 1px solid #8391a5;
    border-radius: 50%;
    background: #1b2742;
    color: #fff;
    font-size: 7px;
    line-height: 8px;
}
```
